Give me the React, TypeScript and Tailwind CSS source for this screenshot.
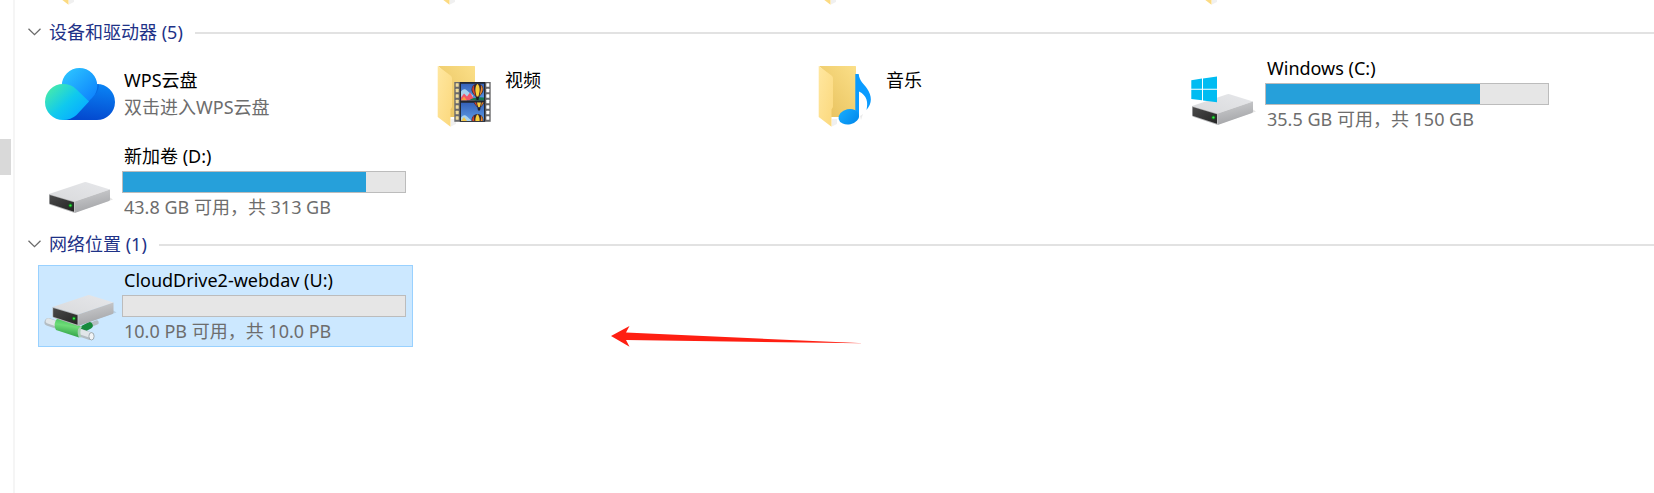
import React, { useState } from 'react';

type IconName = 'wps' | 'video' | 'music' | 'system' | 'disk' | 'network';

interface Item {
  name: string;
  icon: IconName;
  detail?: string;
  used?: number;
  selected?: boolean;
}

const DEVICES: Item[] = [
  { name: 'WPS云盘', icon: 'wps', detail: '双击进入WPS云盘' },
  { name: '视频', icon: 'video' },
  { name: '音乐', icon: 'music' },
  { name: 'Windows (C:)', icon: 'system', detail: '35.5 GB 可用，共 150 GB', used: 76 },
  { name: '新加卷 (D:)', icon: 'disk', detail: '43.8 GB 可用，共 313 GB', used: 86 },
];

const NETWORK: Item[] = [
  { name: 'CloudDrive2-webdav (U:)', icon: 'network', detail: '10.0 PB 可用，共 10.0 PB', used: 0, selected: true },
];

const Gradients: React.FC = () => (
  <svg className="absolute w-0 h-0" aria-hidden="true">
    <defs>
      <linearGradient id="cloudTop" x1="0" y1="0" x2="1" y2="1">
        <stop offset="0" stopColor="#2fcbff" />
        <stop offset="1" stopColor="#0a7bfd" />
      </linearGradient>
      <linearGradient id="cloudRight" x1="0.7" y1="0" x2="0.5" y2="1">
        <stop offset="0" stopColor="#0a84f5" />
        <stop offset="1" stopColor="#0449cf" />
      </linearGradient>
      <linearGradient id="cloudLeft" x1="0.1" y1="0.2" x2="0.8" y2="0.8">
        <stop offset="0" stopColor="#3fe6b4" />
        <stop offset="0.55" stopColor="#10c9ee" />
        <stop offset="1" stopColor="#08b0ff" />
      </linearGradient>
      <linearGradient id="folderBack" x1="0" y1="1" x2="1" y2="0">
        <stop offset="0" stopColor="#e6bf5a" />
        <stop offset="1" stopColor="#fbdf88" />
      </linearGradient>
      <linearGradient id="folderFlap" x1="0" y1="0" x2="1" y2="1">
        <stop offset="0" stopColor="#ffe7a0" />
        <stop offset="1" stopColor="#fbd87c" />
      </linearGradient>
      <linearGradient id="sky" x1="0" y1="0" x2="0" y2="1">
        <stop offset="0" stopColor="#3561b8" />
        <stop offset="1" stopColor="#5d9be6" />
      </linearGradient>
      <linearGradient id="noteHead" x1="0" y1="0" x2="1" y2="1">
        <stop offset="0" stopColor="#19adff" />
        <stop offset="1" stopColor="#0086ea" />
      </linearGradient>
      <linearGradient id="diskTop" x1="0" y1="1" x2="1" y2="0">
        <stop offset="0" stopColor="#d9dadc" />
        <stop offset="1" stopColor="#e6e7ea" />
      </linearGradient>
      <linearGradient id="diskSide" x1="0" y1="0" x2="0.3" y2="1">
        <stop offset="0" stopColor="#cfd0d2" />
        <stop offset="1" stopColor="#a4a5a8" />
      </linearGradient>
      <linearGradient id="diskFront" x1="0" y1="0" x2="1" y2="1">
        <stop offset="0" stopColor="#4a4a4a" />
        <stop offset="1" stopColor="#242424" />
      </linearGradient>
      <linearGradient id="tube" x1="0.6" y1="0" x2="0.4" y2="1">
        <stop offset="0" stopColor="#3fbf58" />
        <stop offset="0.4" stopColor="#6fdc78" />
        <stop offset="1" stopColor="#27993f" />
      </linearGradient>
    </defs>
  </svg>
);

const Folder: React.FC = () => (
  <>
    <path d="M31 72.5l5-2.5v-5h-5z" fill="#000" opacity="0.06" />
    <path d="M18 12h36.500l.5.5V63H30V23z" fill="url(#folderBack)" />
    <path d="M17.700 12L30.500 21.600q1.500 1 1.500 2.600V53l-1.500 2.500v17.200L17.700 63z" fill="url(#folderFlap)" />
  </>
);

const Disk: React.FC = () => (
  <>
    <path d="M36 70.600L74 57.500l-3-2L36 68z" fill="#000" opacity="0.1" />
    <path d="M10 52l35.200-11.700q1.200-.4 2.400 0L71 47.600 35.700 59.500z" fill="url(#diskTop)" />
    <path d="M35.700 59.500L71 47.600v10q0 1-1 1.400L35.700 71z" fill="url(#diskSide)" />
    <path d="M10 52l25.700 7.500V71l-24.500-8.200Q10 62.400 10 61z" fill="#b4b5b7" />
    <path d="M10.700 53l24.300 7.200v9.500l-24.300-8z" fill="url(#diskFront)" />
    <circle cx="31.400" cy="63.500" r="1.900" fill="#0c7a1a" />
    <circle cx="31.400" cy="63.500" r="1.100" fill="#3ee84a" />
  </>
);

const Balloon: React.FC = () => (
  <>
    <path d="M-1.600 7h3.200L1 10h-2z" fill="#20202a" />
    <path d="M0-6.500a6 6 0 0 1 6 6C6 3 2.800 5 1.800 7h-3.600C-2.800 5-6 3-6-.5a6 6 0 0 1 6-6z" fill="#3a2a30" />
    <path d="M-3.600-5C-6.600-1.500-5 2.500-2 6-3 1-4-2-3.600-5z" fill="#d8432f" />
    <path d="M0-6.300C-3.200-3-2.200 2.500-.8 6.600H.8C2.200 2.500 3.200-3 0-6.300z" fill="#f8d03c" />
    <path d="M3.600-5c3 3.500 1.400 7.500-1.600 11C3 1 4-2 3.600-5z" fill="#ee8a2c" />
  </>
);

const HOLES = [0, 1, 2, 3, 4, 5, 6];

const Film: React.FC = () => (
  <>
    <rect x="34.300" y="28" width="36.400" height="39.800" fill="#6a6a6c" />
    {HOLES.map((n) => (
      <g key={n}>
        <rect x="35.700" y={29.3 + n * 5.5} width="3" height="3.400" rx="0.500" fill="#f0dc9c" />
        <rect x="66.300" y={29.3 + n * 5.5} width="3" height="3.400" rx="0.500" fill="#fff" />
      </g>
    ))}
    <rect x="39.800" y="28" width="25.400" height="39.800" fill="#23272f" />
    <svg x="41" y="29.500" width="23" height="17" viewBox="0 0 23 17">
      <rect width="23" height="17" fill="url(#sky)" />
      <path d="M0 8q3-4 6-1t6 5v3H0z" fill="#a9d3ee" />
      <path d="M0 14l3-4 3 3 3-4 5 8H0z" fill="#f0566a" />
      <path d="M0 17l3-4 3 4z" fill="#f6a13c" />
      <path d="M8 17q5-4 15-3v3z" fill="#17784f" />
      <g transform="translate(16.500 6.500)">
        <Balloon />
      </g>
    </svg>
    <svg x="41" y="48.500" width="23" height="18.500" viewBox="0 0 23 18.500">
      <rect width="23" height="18.500" fill="url(#sky)" />
      <g transform="translate(18 -2)">
        <Balloon />
      </g>
      <path d="M0 15q3-4 6-1t6 5H0z" fill="#a9d3ee" />
      <path d="M0 18.500l3-4 3 4z" fill="#f3c64a" />
      <g transform="translate(16.500 18)">
        <Balloon />
      </g>
    </svg>
  </>
);

const Icon: React.FC<{ name: IconName }> = ({ name }) => (
  <svg viewBox="0 0 83 80" className="w-[83px] h-20 shrink-0" aria-hidden="true">
    {name === 'wps' && (
      <>
        <path d="M58 30a18 18 0 0 1 0 36H24L50 46z" fill="url(#cloudRight)" />
        <path d="M51 46l7-8q2-4 2-8-3 0-5 2L44 44z" fill="#0447c4" opacity="0.35" />
        <path d="M22.700 31.800a17.800 17.800 0 0 1 35.600 0q0 7-5 12L48 49 26 34z" fill="url(#cloudTop)" />
        <path d="M24 30a18 18 0 0 0 0 36q8 0 13.500-5L50 47.500 37 35q-5-5-13-5z" fill="url(#cloudLeft)" />
      </>
    )}
    {name === 'video' && (
      <>
        <Folder />
        <Film />
      </>
    )}
    {name === 'music' && (
      <>
        <Folder />
        <path d="M59 62l3-2-2 6z" fill="#000" opacity="0.08" />
        <path d="M54.300 20h3.400c.6 7 5.300 10 8.300 14.500 5 7.500 5.500 14.500-.5 21.500 1.800-8 .5-14.500-7.500-18.500V63h-3.700z" fill="#0a9bff" />
        <ellipse cx="47.800" cy="62.800" rx="10.400" ry="7.600" transform="rotate(-12 47.800 62.800)" fill="url(#noteHead)" />
      </>
    )}
    {name === 'disk' && <Disk />}
    {name === 'system' && (
      <>
        <Disk />
        <path d="M9.300 26.200l10.700-1.700v10.300H9.300zM21 24.400l14-1.900v12.300H21zM9.300 35.800H20v10.400L9.300 45zM21 35.800h14v12.500l-14-1.900z" fill="#00bcf2" />
      </>
    )}
    {name === 'network' && (
      <>
        <path d="M48 60.500l9.500-4" stroke="#b4bdc3" strokeWidth="4.500" strokeLinecap="round" />
        <path d="M40 65l10.500-5.500" stroke="#178a3c" strokeWidth="6.500" strokeLinecap="round" />
        <path d="M9.500 56L51 70" stroke="#b3bdc3" strokeWidth="8" strokeLinecap="round" />
        <path d="M9.500 55L51 69" stroke="#e1e6e9" strokeWidth="5.500" strokeLinecap="round" />
        <path d="M18.500 52l23 8q-3.500 5-1.500 11.500L17 64q-3.500-6 1.500-12z" fill="url(#tube)" />
        <path d="M41.500 60q-5 5-1.500 11.500l2.500-.3q-2.500-5.200.500-10.700z" fill="#a8cfb4" />
        <ellipse cx="52.500" cy="70.300" rx="2.600" ry="3.700" fill="#f1f4f6" stroke="#8f9aa1" strokeWidth="0.800" />
        <g transform="translate(3.500 -11)">
          <Disk />
        </g>
      </>
    )}
  </svg>
);

const Tile: React.FC<{ item: Item }> = ({ item }) => (
  <button
    type="button"
    className={`flex w-full h-[82px] border text-left ${item.selected ? 'bg-[#cce8ff] border-[#99d1ff]' : 'border-transparent'}`}
  >
    <Icon name={item.icon} />
    {item.used === undefined ? (
      <span className="flex flex-col gap-[3px] pl-0.5 pt-3.5 whitespace-nowrap">
        <span className="leading-6 text-black">{item.name}</span>
        {item.detail && <span className="leading-6 text-[#6d6d6d]">{item.detail}</span>}
      </span>
    ) : (
      <span className="flex flex-col flex-1 pt-0.5 pr-1.5 whitespace-nowrap">
        <span className="pl-0.5 leading-6 text-black">{item.name}</span>
        <span className="block h-[22px] mt-[3px] mb-0.5 border border-[#bcbcbc] bg-[#e6e6e6]">
          <span className="block h-full bg-[#26a0da]" style={{ width: `${item.used}%` }}></span>
        </span>
        <span className="pl-0.5 leading-6 text-[#6d6d6d]">{item.detail}</span>
      </span>
    )}
  </button>
);

const Group: React.FC<{ title: string; items: Item[] }> = ({ title, items }) => {
  const [open, setOpen] = useState(true);

  return (
    <section>
      <h2 className="flex items-center gap-3 h-[42px] pl-[13px]">
        <button type="button" aria-expanded={open} onClick={() => setOpen(!open)} className="flex items-center gap-2 text-[#1e3287]">
          <svg viewBox="0 0 13 8" className="w-[13px] h-2" fill="none" stroke="#6b6b6b" strokeWidth="1.3" aria-hidden="true">
            <path d="M.5 .7l6 6 6-6" />
          </svg>
          <span className="leading-6 whitespace-nowrap">{title}</span>
        </button>
        <span className="flex-1 h-0.5 mt-0.5 bg-[#e2e2e2]"></span>
      </h2>
      {open && (
        <ul className="grid grid-cols-[repeat(auto-fill,375px)] gap-1.5 pl-[23px]">
          {items.map((item) => (
            <li key={item.name}>
              <Tile item={item} />
            </li>
          ))}
        </ul>
      )}
    </section>
  );
};

const App: React.FC = () => {
  return (
    <div className="relative flex min-h-screen bg-white overflow-hidden text-[18px] font-['Noto_Sans','Noto_Sans_CJK_SC',sans-serif]">
      <Gradients />
      <aside className="w-[15px] shrink-0 border-r-2 border-[#f5f5f5] pt-[139px]">
        <div className="w-[11px] h-9 bg-[#d9d9d9]"></div>
      </aside>

      <main className="flex-1 min-w-0">
        {/* lower edge of the folder row scrolled out above */}
        <div className="grid grid-cols-[repeat(auto-fill,375px)] gap-x-1.5 h-[11px] pl-[23px] overflow-hidden">
          {[0, 1, 2, 3].map((n) => (
            <svg key={n} viewBox="0 68 83 11" className="w-[83px] h-[11px]" aria-hidden="true">
              <Folder />
            </svg>
          ))}
        </div>
        <Group title="设备和驱动器 (5)" items={DEVICES} />
        <Group title="网络位置 (1)" items={NETWORK} />
      </main>

      <svg viewBox="0 0 254 22" className="absolute left-[611px] top-[326px] w-[254px] h-[22px] pointer-events-none" aria-hidden="true">
        <path d="M0 10L18.500 0 15 6.500 253 17.300 15 14l3.500 6.800z" fill="#ff1f12" />
      </svg>
    </div>
  );
};

export default App;
